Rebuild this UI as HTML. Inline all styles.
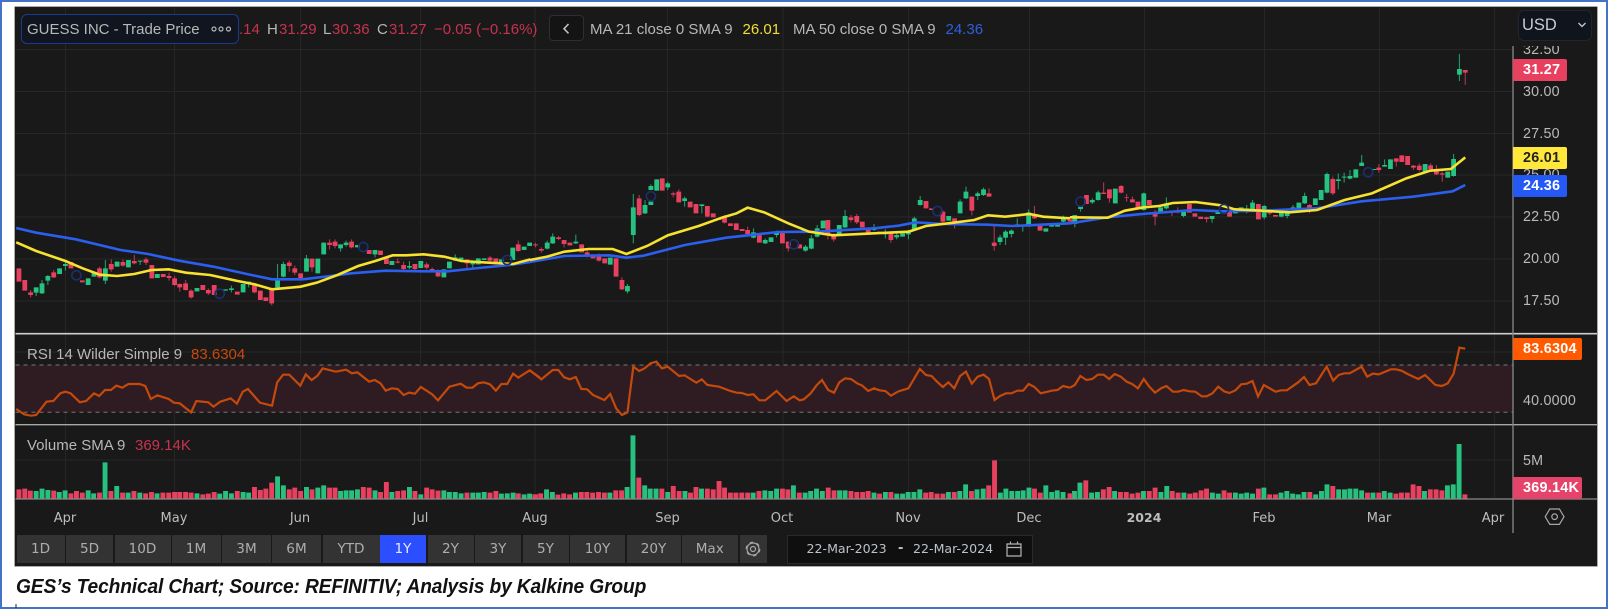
<!DOCTYPE html>
<html lang="en">
<head>
<meta charset="utf-8">
<title>GES Technical Chart</title>
<style>
html,body{margin:0;padding:0;background:#fff}
body{width:1608px;height:609px;position:relative;overflow:hidden;font-family:"Liberation Sans",sans-serif}
.wrap{position:absolute;left:0;top:0;width:1608px;height:609px;overflow:hidden;filter:blur(.35px)}
.frame{position:absolute;left:0;top:0;width:1608px;height:609px;box-sizing:border-box;border:2px solid #4472c4}
.chart{position:absolute;left:15px;top:7px;width:1582px;height:559px;background:#191919;box-shadow:0 0 0 .5px #555}
svg.main{position:absolute;left:0;top:0}
.t{position:absolute;white-space:nowrap;line-height:1;font-size:15px;color:#b8b8b8}
.r{color:#c8324f}
.c{transform:translateX(-50%)}
.ax{font-size:14.3px;letter-spacing:.2px;left:1523px;color:#bababa}
.tag{position:absolute;left:1513px;width:53.6px;height:22px;box-sizing:border-box;padding-left:10px;border-radius:0 2px 2px 0;color:#fff;font-weight:bold;font-size:14.4px;line-height:22px;text-align:left;letter-spacing:.25px}
.tm{font-family:"DejaVu Sans",sans-serif;font-size:13px;color:#bdbdbd;top:512px}
.b{position:absolute;top:535px;height:28px;background:#333;color:#adadad;font-family:"DejaVu Sans",sans-serif;font-size:13.6px;line-height:29px;text-align:center}
.n{vector-effect:non-scaling-stroke;fill:none}
</style>
</head>
<body>
<div class="wrap">
<div class="frame"></div>
<div class="chart"></div>

<svg class="main" width="1608" height="609" viewBox="0 0 1608 609">
  <!-- grid -->
  <path d="M15.5 49.5H1513M15.5 91.5H1513M15.5 133.5H1513M15.5 175H1513M15.5 217H1513M15.5 259H1513M15.5 301H1513M15.5 352H1513M15.5 401H1513M15.5 460H1513" stroke="#262626" stroke-width="1" fill="none"/>
  <path d="M65.5 8V498M174.5 8V498M300.5 8V498M420.5 8V498M535 8V498M667.5 8V498M783 8V498M908.5 8V498M1029.5 8V498M1144.5 8V498M1264.5 8V498M1379.5 8V498M1494.5 8V498" stroke="#262626" stroke-width="1" fill="none"/>

  <!-- RSI band -->
  <rect x="15.5" y="365" width="1497.5" height="47.3" fill="#2f1b22"/>
  <path d="M15.5 365H1513M15.5 412.3H1513" stroke="#777" stroke-width="1" stroke-dasharray="4 4" fill="none"/>

  <!-- group A: 0..530 -->
  <g transform="translate(0,200) scale(.34436,.33333)">
    <path class="n" stroke="#1f9a68" stroke-width="1.1" d="M105 262V288M122 240V282M139 225V255M173 205V222M190 185V212M256 235V255M273 216V230M306 180V252M340 185V200M373 180V202M407 182V195M457 222V234M572 264V274M655 268V272M672 257V277M706 252V277M722 245V262M806 192V270M823 185V232M890 165V215M923 176V220M940 128V163M989 133V155M1005 122V140M1038 135V142M1089 150V172M1138 183V195M1189 183V207M1222 183V204M1289 208V232M1305 185V205M1322 163V183M1339 173V180M1373 188V205M1389 175V193M1406 175V180M1456 178V190M1489 143V180M1522 140V150M1538 128V138"/>
    <path class="n" stroke="#b03450" stroke-width="1.1" d="M89 270V292M156 210V234M289 200V235M323 178V215M357 178V200M390 165V193M424 172V195M491 218V242M507 228V258M522 250V275M539 240V272M555 268V296M605 265V285M739 250V280M789 263V316M840 182V215M856 197V225M906 176V215M957 118V148M973 118V145M1021 118V145M1155 175V190M1172 185V210M1205 192V212M1239 187V208M1255 203V215M1272 208V231M1356 178V205M1423 168V192M1505 122V155M1555 128V142"/>
    <path class="n" stroke="#26c281" stroke-width="4.8" d="M105 262V278M122 250V280M139 228V242M173 205V222M190 192V198M256 235V255M273 216V230M306 205V242M340 185V200M373 180V202M407 182V185M457 222V234M572 264V274M655 268V272M672 265V270M706 252V277M722 245V252M806 237V262M823 192V230M890 175V215M923 176V220M940 128V163M989 133V145M1005 128V135M1038 135V142M1089 150V163M1138 183V195M1189 198V203M1222 183V204M1289 208V232M1305 185V205M1322 172V182M1339 173V180M1373 188V193M1389 175V193M1406 175V180M1456 178V190M1489 143V180M1522 140V150M1538 128V138"/>
    <path class="n" stroke="#e8405f" stroke-width="4.8" d="M55 205V245M72 240V272M89 277V285M156 217V232M206 186V205M239 241V247M289 205V232M323 192V208M357 186V197M390 183V190M424 178V188M441 195V235M474 222V231M491 228V234M507 235V255M522 252V262M539 250V270M555 272V292M589 255V270M605 270V280M622 255V285M689 275V284M739 255V277M756 272V300M772 292V303M789 266V310M840 188V198M856 205V218M873 220V235M906 176V202M957 128V135M973 125V138M1021 125V142M1072 150V162M1105 152V165M1122 175V192M1155 185V188M1172 195V207M1205 192V207M1239 193V203M1255 207V213M1272 215V229M1356 178V190M1423 173V182M1440 175V193M1505 133V153M1555 133V136"/>
    <path class="n" stroke="#2a5ff0" stroke-width="2.6" d="M47 84L105 98L220 118L350 150L430 162L520 182L620 200L730 225L790 238L880 238L960 228L1020 220L1120 212L1230 214L1300 214L1390 204L1480 195L1540 186"/>
    <path class="n" stroke="#f7e22f" stroke-width="2.6" d="M47 127L105 153L190 183L240 205L290 224L340 228L390 222L440 210L490 208L540 218L610 225L690 243L740 253L790 268L873 260L920 248L980 225L1040 198L1090 183L1140 166L1180 166L1230 163L1290 170L1340 183L1420 188L1490 192L1540 178"/>
  </g>

  <!-- group B: 530..1070 -->
  <g transform="translate(530,0) scale(.34436,.33333)">
    <path class="n" stroke="#1f9a68" stroke-width="1.1" d="M50 722V748M66 700V732M133 704V732M233 773V794M283 852V880M300 582V730M334 600V642M351 553V570M368 538V572M400 545V570M449 590V620M499 613V640M649 685V715M683 715V732M700 712V726M716 692V712M800 735V755M817 705V748M834 675V712M851 662V685M898 675V703M915 630V684M999 672V693M1032 688V715M1065 700V718M1082 700V710M1099 690V718M1116 650V692M1133 588V617M1216 648V662M1249 598V640M1266 560V597M1300 575V600M1317 563V588M1365 705V735M1381 690V735M1398 688V712M1415 655V680M1431 675V695M1448 628V680M1498 685V695M1515 672V680M1532 670V680M1549 647V667"/>
    <path class="n" stroke="#b03450" stroke-width="1.1" d="M33 742V758M83 708V720M99 720V742M166 750V772M200 760V785M267 832V870M317 585V648M416 575V592M432 568V607M515 618V652M565 645V670M632 680V702M750 725V755M865 660V718M882 700V725M932 645V667M949 642V672M1048 695V728M1199 632V675M1233 655V685M1283 590V646M1333 565V590M1348 678V752M1465 618V657"/>
    <path class="n" stroke="#26c281" stroke-width="4.8" d="M50 728V746M66 710V730M133 725V730M233 773V794M283 858V874M300 622V705M334 615V640M351 605V615M351 558V570M368 538V572M400 550V562M449 595V603M499 613V618M649 697V713M683 720V730M700 712V726M716 695V705M800 740V752M817 715V746M834 685V710M851 662V685M898 675V703M915 648V682M999 682V690M1032 697V703M1065 705V712M1082 700V710M1099 698V703M1116 655V690M1133 600V615M1216 648V662M1249 605V640M1266 575V595M1300 580V588M1317 568V585M1365 712V726M1381 695V713M1398 692V702M1415 673V678M1431 675V677M1448 637V680M1498 685V695M1515 672V680M1532 670V680M1549 655V665"/>
    <path class="n" stroke="#e8405f" stroke-width="4.8" d="M33 747V752M83 712V717M99 720V732M116 728V736M150 733V757M166 757V765M183 763V775M200 767V782M217 775V790M250 775V830M267 840V868M317 595V645M384 535V572M416 580V584M432 575V607M465 605V622M482 612V640M515 618V650M532 640V652M549 655V660M565 648V668M582 670V678M599 670V690M616 687V693M632 690V702M666 705V728M733 697V730M750 725V745M783 733V745M865 660V705M882 702V718M932 652V660M949 648V667M965 665V682M982 684V700M1015 695V700M1048 700V720M1150 603V625M1166 625V630M1199 635V665M1233 655V675M1283 590V632M1333 580V590M1348 728V738M1465 642V655M1481 675V692"/>
    <path class="n" stroke="#2a5ff0" stroke-width="2.6" d="M0 786L100 768L230 766L280 773L330 767L450 735L570 713L650 704L720 696L830 695L1000 685L1070 677L1120 667L1200 672L1330 674L1400 678L1568 670"/>
    <path class="n" stroke="#f7e22f" stroke-width="2.6" d="M0 780L50 770L100 755L170 747L240 747L280 762L340 738L400 706L490 678L560 652L600 640L632 623L680 637L750 670L810 695L880 706L1000 700L1100 695L1150 678L1230 668L1290 660L1330 646L1380 650L1450 642L1490 650L1568 655"/>
  </g>

  <!-- group C: 1070.. -->
  <g transform="translate(1070,0) scale(.34311,.33333)">
    <path class="n" stroke="#1f9a68" stroke-width="1.1" d="M14 645V682M31 620V635M65 595V612M82 572V602M132 566V610M215 578V632M264 622V640M281 592V628M331 628V652M414 648V668M431 630V642M482 630V640M499 622V632M515 615V640M532 600V630M566 615V658M616 628V652M633 628V655M650 615V635M667 608V630M684 578V612M715 595V615M732 570V600M749 518V580M782 520V568M799 518V548M816 510V538M833 508V533M850 465V498M886 507V510M917 478V500M934 478V507M1035 492V516M1101 515V533M1118 462V530M1135 162V243"/>
    <path class="n" stroke="#b03450" stroke-width="1.1" d="M98 547V582M115 568V608M149 555V580M165 582V605M182 590V608M248 630V676M297 632V648M314 622V640M398 650V667M465 628V650M582 628V645M698 612V640M766 530V585M900 492V518M951 475V500M1001 495V510M1018 490V514M1051 490V510M1068 495V525M1085 515V545M1152 210V255"/>
    <path class="n" stroke="#26c281" stroke-width="4.8" d="M14 645V672M31 620V627M65 600V607M82 577V600M132 566V610M215 580V630M264 622V640M281 610V625M331 630V648M414 648V657M431 630V642M482 630V640M499 622V632M515 625V632M532 608V628M566 618V652M616 635V650M633 636V648M650 622V632M667 608V630M684 588V610M715 595V615M732 570V600M749 522V578M782 538V543M799 530V533M816 528V536M833 508V533M850 488V498M886 507V510M917 495V500M934 478V507M1035 492V516M1101 515V533M1118 477V528M1135 207V224"/>
    <path class="n" stroke="#e8405f" stroke-width="4.8" d="M0 658V665M48 585V612M98 578V582M115 568V595M149 558V578M165 592V594M182 598V607M198 605V622M231 600V615M248 640V650M297 632V636M314 632V638M348 612V638M364 640V650M381 650V657M398 652V657M465 635V650M549 612V658M582 632V640M599 645V650M698 615V625M766 537V580M900 503V510M951 475V485M967 466V486M984 468V495M1001 497V503M1018 497V510M1051 496V508M1068 510V523M1085 520V524M1152 210V218"/>
    <path class="n" stroke="#2a5ff0" stroke-width="2.6" d="M0 670L110 652L200 643L360 630L440 634L560 632L720 625L850 604L1000 590L1115 574L1152 555"/>
    <path class="n" stroke="#f7e22f" stroke-width="2.6" d="M0 652L110 653L160 632L215 622L260 618L300 609L365 606L440 616L480 628L560 632L640 637L720 630L800 600L880 580L980 535L1050 512L1110 507L1152 472"/>
  </g>

  <!-- event markers -->
  <g fill="none" stroke="#1a2f70" stroke-width="1.6">
    <circle cx="76.4" cy="275.3" r="4.6"/><circle cx="219.7" cy="293.7" r="4.6"/><circle cx="363.3" cy="247" r="4.6"/><circle cx="507.2" cy="260" r="4.6"/>
    <circle cx="650.9" cy="196.3" r="4.6"/><circle cx="793.8" cy="244.3" r="4.6"/><circle cx="937.4" cy="211" r="4.6"/><circle cx="1080.6" cy="201.7" r="4.6"/>
    <circle cx="1224" cy="209" r="4.6"/><circle cx="1368.2" cy="172.3" r="4.6"/>
  </g>

  <!-- RSI line -->
  <g transform="translate(0,325) scale(.34436,.33333)">
    <path class="n" stroke="#c44a0b" stroke-width="2.2" d="M47 252L70 268L90 272L105 270L135 230L155 228L175 205L190 200L205 205L232 232L250 228L273 205L288 213L305 195L322 195L338 182L355 188L373 177L405 177L422 183L438 222L457 211L490 222L505 233L522 235L555 262L570 228L605 232L620 245L640 230L670 220L688 236L705 200L720 192L755 233L790 242L805 172L822 149L840 149L872 182L888 148L905 165L922 152L937 130L975 140L1005 134L1022 145L1038 142L1072 170L1088 165L1105 175L1120 197L1138 190L1155 192L1172 210L1188 203L1205 206L1222 186L1255 208L1272 226L1305 185L1338 176L1355 188L1372 188L1388 175L1405 172L1423 178L1440 197L1456 177L1473 177L1490 146L1505 158L1538 136L1568 158"/>
  </g>
  <g transform="translate(530,325) scale(.34436,.33333)">
    <path class="n" stroke="#c44a0b" stroke-width="2.2" d="M0 136L33 163L66 135L82 135L99 157L116 163L133 156L149 192L166 193L183 210L216 225L233 207L250 250L267 270L283 262L300 125L317 138L333 130L350 115L367 110L383 130L400 125L433 153L449 151L483 173L499 163L515 180L549 185L582 198L600 203L615 204L632 210L649 208L666 226L683 226L716 198L745 228L766 214L783 226L795 223L815 205L833 180L848 165L866 195L883 203L898 172L915 160L932 162L950 175L965 182L982 198L999 190L1015 196L1032 198L1048 212L1070 199L1099 190L1132 132L1150 150L1166 153L1182 170L1199 186L1215 172L1232 190L1249 153L1266 140L1283 176L1300 155L1317 149L1333 162L1349 225L1365 213L1382 205L1398 205L1415 197L1432 197L1448 177L1465 186L1483 205L1515 197L1532 195L1548 183L1568 188"/>
  </g>
  <g transform="translate(1070,325) scale(.34311,.33333)">
    <path class="n" stroke="#c44a0b" stroke-width="2.2" d="M0 188L14 180L30 153L48 165L65 162L81 149L98 149L114 162L130 147L148 155L165 170L181 177L198 190L215 162L231 185L248 203L265 190L281 183L300 200L315 200L331 195L348 199L365 200L384 214L398 214L415 205L432 185L449 199L465 204L482 196L499 178L515 176L532 168L548 214L565 180L599 200L615 196L632 196L665 172L682 156L698 180L717 175L748 125L767 167L783 150L800 145L815 145L850 125L866 155L883 146L900 148L935 133L950 133L966 137L984 147L1015 162L1035 150L1065 180L1084 183L1101 175L1118 146L1135 68L1152 71"/>
  </g>

  <!-- Volume -->
  <g transform="translate(0,325) scale(.34436,.33333)">
    <path class="n" stroke="#28c07f" stroke-width="4.9" d="M105 498V521M122 491V521M139 495V521M172 501V521M189 496V521M256 496V521M272 505V521M305 412V521M339 483V521M372 503V521M406 503V521M456 505V521M572 505V521M638 506V521M655 498V521M672 505V521M706 501V521M722 503V521M806 454V521M823 481V521M890 486V521M923 488V521M940 481V521M989 498V521M1005 496V521M1021 496V521M1038 493V521M1089 496V521M1138 501V521M1189 486V521M1222 508V521M1289 496V521M1305 501V521M1322 501V521M1339 505V521M1373 503V521M1389 503V521M1406 501V521M1456 506V521M1473 505V521M1490 503V521M1522 508V521M1538 506V521"/>
    <path class="n" stroke="#e8405f" stroke-width="4.9" d="M55 493V521M72 491V521M88 497V521M156 497V521M206 505V521M222 498V521M239 503V521M289 503V521M322 498V521M356 503V521M389 498V521M423 505V521M440 501V521M473 503V521M490 503V521M507 501V521M522 501V521M539 501V521M555 503V521M589 508V521M605 506V521M622 501V521M689 498V521M739 486V521M756 495V521M772 491V521M789 473V521M840 493V521M856 488V521M873 498V521M906 493V521M957 488V521M973 488V521M1055 486V521M1072 488V521M1105 501V521M1122 471V521M1155 498V521M1172 496V521M1205 498V521M1239 488V521M1255 493V521M1272 497V521M1356 503V521M1423 503V521M1440 498V521M1505 505V521M1555 508V521"/>
  </g>
  <g transform="translate(530,325) scale(.34436,.33333)">
    <path class="n" stroke="#28c07f" stroke-width="4.9" d="M48 493V521M65 501V521M132 503V521M232 503V521M282 486V521M299 331V521M333 481V521M349 491V521M366 491V521M400 501V521M450 498V521M498 491V521M648 503V521M682 496V521M699 498V521M716 491V521M765 481V521M799 503V521M815 498V521M832 491V521M849 498V521M899 496V521M915 496V521M999 503V521M1032 501V521M1065 506V521M1082 506V521M1098 501V521M1115 501V521M1132 493V521M1215 501V521M1248 498V521M1265 478V521M1298 493V521M1316 491V521M1366 503V521M1382 491V521M1399 498V521M1416 498V521M1432 496V521M1449 488V521M1498 481V521M1515 501V521M1531 496V521M1548 501V521"/>
    <path class="n" stroke="#e8405f" stroke-width="4.9" d="M14 508V521M31 505V521M81 509V521M98 505V521M115 508V521M149 501V521M165 501V521M182 503V521M199 501V521M216 503V521M249 496V521M266 496V521M316 458V521M383 491V521M416 483V521M433 498V521M466 503V521M482 486V521M515 491V521M532 493V521M549 468V521M565 488V521M582 503V521M598 503V521M615 503V521M632 503V521M665 498V521M733 491V521M749 493V521M782 503V521M866 488V521M883 496V521M932 498V521M949 501V521M966 501V521M982 498V521M1015 506V521M1048 501V521M1149 503V521M1165 501V521M1182 506V521M1199 506V521M1232 501V521M1282 498V521M1332 481V521M1349 406V521M1465 491V521M1482 503V521"/>
  </g>
  <g transform="translate(1070,325) scale(.34311,.33333)">
    <path class="n" stroke="#28c07f" stroke-width="4.9" d="M13 498V521M29 473V521M63 503V521M80 501V521M130 498V521M214 498V521M265 501V521M282 483V521M332 503V521M415 503V521M432 506V521M482 503V521M499 506V521M515 503V521M532 506V521M565 488V521M615 503V521M632 498V521M649 506V521M665 508V521M682 501V521M716 508V521M733 498V521M749 478V521M783 493V521M800 493V521M816 491V521M833 491V521M850 496V521M883 503V521M916 498V521M933 503V521M1033 498V521M1100 481V521M1117 478V521M1134 357V521"/>
    <path class="n" stroke="#e8405f" stroke-width="4.9" d="M0 505V521M46 466V521M97 493V521M114 486V521M147 501V521M164 501V521M181 506V521M198 503V521M231 498V521M248 488V521M298 498V521M315 503V521M349 506V521M365 503V521M382 496V521M398 491V521M449 496V521M465 503V521M549 491V521M582 508V521M599 508V521M699 501V521M766 483V521M867 503V521M900 503V521M950 506V521M966 503V521M983 503V521M1000 478V521M1017 483V521M1050 493V521M1067 493V521M1084 496V521M1151 508V521"/>
  </g>

  <!-- separators and axes -->
  <path d="M15.5 333.7H1597" stroke="#cfcfcf" stroke-width="1.6"/>
  <path d="M15.5 424.7H1597" stroke="#a8a8a8" stroke-width="1.4"/>
  <path d="M15.5 499H1597" stroke="#8a8a8a" stroke-width="1.2"/>
  <path d="M1513 46V533" stroke="#8a8a8a" stroke-width="1.3"/>

  <!-- tiny tick bottom-left -->
  <path d="M16 604V608" stroke="#222" stroke-width="1"/>

  <!-- hexagon settings -->
  <path d="M1549.8 509L1559.4 509L1564 516.7L1559.4 524.4L1549.8 524.4L1545.2 516.7Z" fill="none" stroke="#a8a8a8" stroke-width="1.2"/>
  <circle cx="1554.6" cy="516.7" r="2.8" fill="none" stroke="#a8a8a8" stroke-width="1.2"/>
</svg>

<!-- header legend box -->
<div style="position:absolute;left:21px;top:14px;width:218px;height:30px;box-sizing:border-box;border:1.5px solid #1c3b8c;border-radius:6px;background:#10151f"></div>
<span class="t" style="left:27px;top:22px">GUESS INC - Trade Price</span>
<svg style="position:absolute;left:209px;top:25px" width="26" height="8"><g fill="none" stroke="#b5b5b5" stroke-width="1.2"><circle cx="5" cy="4" r="2"/><circle cx="12" cy="4" r="2"/><circle cx="19.5" cy="4" r="2"/></g></svg>

<span class="t r" style="left:239px;top:22px">.14</span>
<span class="t" style="left:267px;top:22px">H</span><span class="t r" style="left:279px;top:22px">31.29</span>
<span class="t" style="left:323px;top:22px">L</span><span class="t r" style="left:332px;top:22px">30.36</span>
<span class="t" style="left:377px;top:22px">C</span><span class="t r" style="left:389px;top:22px">31.27</span>
<span class="t r" style="left:434px;top:22px">−0.05 (−0.16%)</span>

<div style="position:absolute;left:549px;top:15px;width:35px;height:26px;box-sizing:border-box;border:1px solid #2c2f35;border-radius:4px;background:#141414"></div>
<svg style="position:absolute;left:549px;top:15px" width="35" height="26"><path d="M19.5 9L15 13.7L19.5 18.4" fill="none" stroke="#c8c8c8" stroke-width="1.5"/></svg>
<span class="t" style="left:590px;top:22px">MA 21 close 0 SMA 9</span>
<span class="t" style="left:742.5px;top:22px;color:#f2df33">26.01</span>
<span class="t" style="left:793px;top:22px">MA 50 close 0 SMA 9</span>
<span class="t" style="left:945.5px;top:22px;color:#2e5fdc">24.36</span>

<!-- USD -->
<div style="position:absolute;left:1518px;top:10px;width:74px;height:31px;box-sizing:border-box;border:1px solid #20252e;border-radius:6px;background:#10141c"></div>
<span class="t" style="left:1522px;top:17px;font-size:16.5px;color:#c4ccd6">USD</span>
<svg style="position:absolute;left:1577px;top:22px" width="10" height="6"><path d="M1.5 1L5 4.5L8.5 1" fill="none" stroke="#c4ccd6" stroke-width="1.3"/></svg>

<!-- price axis labels -->
<div style="position:absolute;left:1514px;top:46px;width:60px;height:12px;overflow:hidden"><span class="t ax" style="left:9px;top:-3px">32.50</span></div>
<span class="t ax" style="top:85px">30.00</span>
<span class="t ax" style="top:126.5px">27.50</span>
<span class="t ax" style="top:168px">25.00</span>
<span class="t ax" style="top:210px">22.50</span>
<span class="t ax" style="top:252px">20.00</span>
<span class="t ax" style="top:294px">17.50</span>

<div class="tag" style="top:59px;background:#e8405f">31.27</div>
<div class="tag" style="top:147.3px;background:#ffe83a;color:#222">26.01</div>
<div class="tag" style="top:174.7px;background:#2459f5">24.36</div>
<div class="tag" style="top:338px;width:69px;background:#ff5a00">83.6304</div>
<div class="tag" style="top:477px;width:69px;background:#e6436a">369.14K</div>

<span class="t ax" style="top:394px">40.0000</span>
<span class="t ax" style="top:454px">5M</span>

<!-- Panel labels -->
<span class="t" style="left:27px;top:347px">RSI 14 Wilder Simple 9</span>
<span class="t" style="left:191px;top:347px;color:#c9490a">83.6304</span>
<span class="t" style="left:27px;top:438px">Volume SMA 9</span>
<span class="t r" style="left:135px;top:438px">369.14K</span>

<!-- Time axis -->
<span class="t tm c" style="left:65px">Apr</span>
<span class="t tm c" style="left:174px">May</span>
<span class="t tm c" style="left:300px">Jun</span>
<span class="t tm c" style="left:420.5px">Jul</span>
<span class="t tm c" style="left:535px">Aug</span>
<span class="t tm c" style="left:667.5px">Sep</span>
<span class="t tm c" style="left:782px">Oct</span>
<span class="t tm c" style="left:908px">Nov</span>
<span class="t tm c" style="left:1029px">Dec</span>
<span class="t tm c" style="left:1144px;font-size:12.5px;font-weight:bold">2024</span>
<span class="t tm c" style="left:1264px">Feb</span>
<span class="t tm c" style="left:1379px">Mar</span>
<span class="t tm c" style="left:1493px">Apr</span>

<!-- Range buttons -->
<div class="b" style="left:16.5px;width:48px">1D</div>
<div class="b" style="left:66px;width:47px">5D</div>
<div class="b" style="left:114.5px;width:56px">10D</div>
<div class="b" style="left:171.5px;width:49px">1M</div>
<div class="b" style="left:222px;width:49px">3M</div>
<div class="b" style="left:272px;width:49px">6M</div>
<div class="b" style="left:322.5px;width:57px">YTD</div>
<div class="b" style="left:380px;width:46px;background:#2b4fff;color:#e6e9ff">1Y</div>
<div class="b" style="left:427.5px;width:46px">2Y</div>
<div class="b" style="left:475px;width:46px">3Y</div>
<div class="b" style="left:522.5px;width:46px">5Y</div>
<div class="b" style="left:570px;width:55px">10Y</div>
<div class="b" style="left:626.5px;width:54px">20Y</div>
<div class="b" style="left:682px;width:55.5px">Max</div>
<div class="b" style="left:739.5px;width:27.5px"></div>
<svg style="position:absolute;left:743px;top:539px" width="20" height="20"><circle cx="10" cy="10" r="2.5" fill="none" stroke="#a8a8a8" stroke-width="1.2"/><circle cx="10" cy="10" r="6" fill="none" stroke="#a8a8a8" stroke-width="1.2"/><circle cx="10" cy="10" r="6.8" fill="none" stroke="#a8a8a8" stroke-width="1.2" stroke-dasharray="3.5 3.62"/></svg>

<!-- Date range -->
<div style="position:absolute;left:787px;top:534.5px;width:246px;height:29px;box-sizing:border-box;border:1px solid #2a2a2a;background:#0f0f0f"></div>
<span class="t" style="left:806.5px;top:543px;font-family:'DejaVu Sans',sans-serif;font-size:12.6px;color:#bcc2ca">22-Mar-2023</span>
<span class="t" style="left:898px;top:542px;font-family:'DejaVu Sans',sans-serif;font-size:13px;font-weight:bold;color:#c4c4c4">-</span>
<span class="t" style="left:913px;top:543px;font-family:'DejaVu Sans',sans-serif;font-size:12.6px;color:#bcc2ca">22-Mar-2024</span>
<svg style="position:absolute;left:1006px;top:541px" width="16" height="16"><path d="M1 3H15V15H1ZM1 6.5H15M4.5 .5V3M11.5 .5V3" fill="none" stroke="#b4b4b4" stroke-width="1.2"/></svg>

<!-- Caption -->
<span class="t" style="left:16px;top:577px;font-size:20px;font-weight:bold;font-style:italic;color:#111;letter-spacing:-.15px;transform-origin:left top;transform:scaleX(.96)">GES’s Technical Chart; Source: REFINITIV; Analysis by Kalkine Group</span>
</div>
</body>
</html>
